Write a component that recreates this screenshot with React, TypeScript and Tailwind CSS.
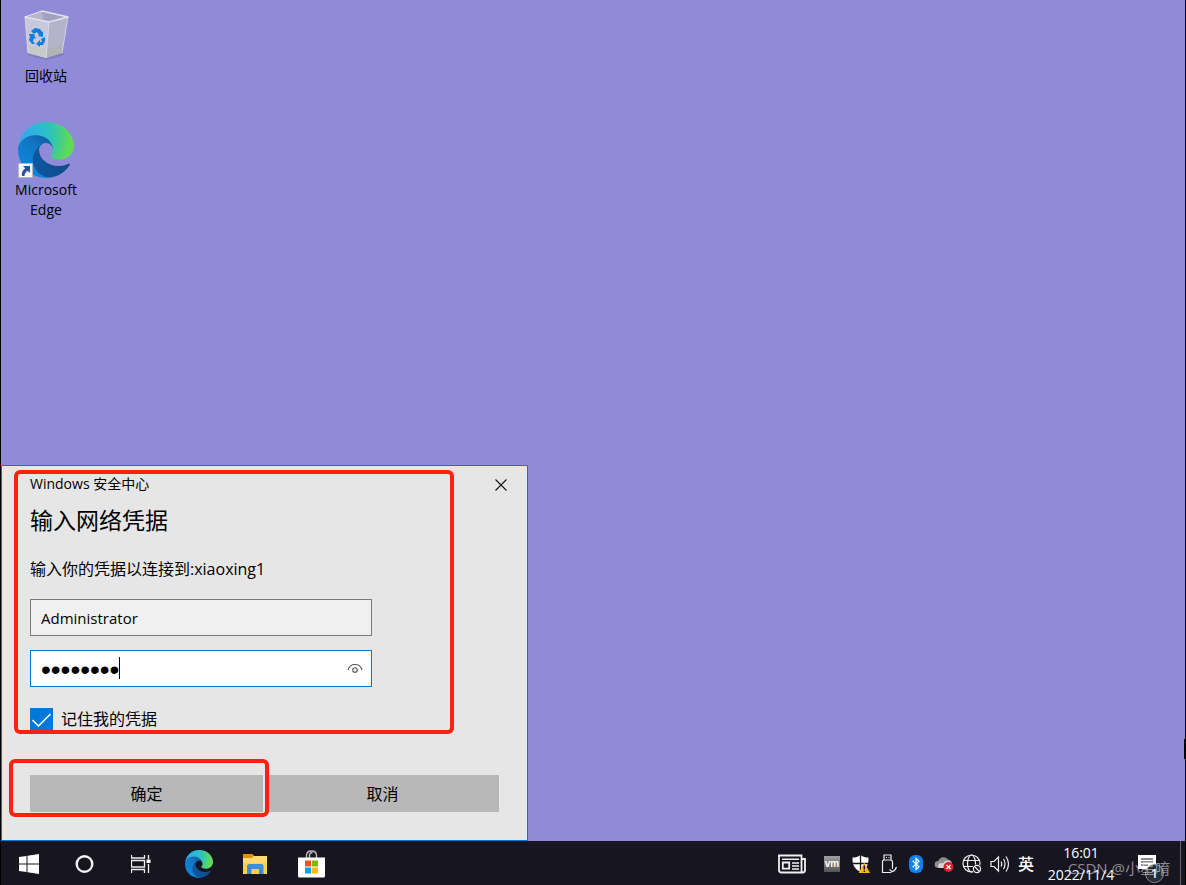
import React, { FC, ReactNode } from 'react'

const EdgeLogo: FC<{ size: string, id: string }> = ({ size, id }) => (
    <svg className={size} viewBox="0 0 256 256" aria-hidden="true">
        <defs>
            <linearGradient id={`${id}-dark`} x1="60" y1="180" x2="240" y2="180" gradientUnits="userSpaceOnUse">
                <stop offset="0" stopColor="#0c59a4" />
                <stop offset="1" stopColor="#114a8b" />
            </linearGradient>
            <linearGradient id={`${id}-blue`} x1="150" y1="95" x2="45" y2="225" gradientUnits="userSpaceOnUse">
                <stop offset="0" stopColor="#115fa8" />
                <stop offset=".35" stopColor="#1277c4" />
                <stop offset="1" stopColor="#0a86dc" />
            </linearGradient>
            <radialGradient id={`${id}-green`} cx="26" cy="70" r="230" gradientUnits="userSpaceOnUse">
                <stop offset="0" stopColor="#35a8e8" />
                <stop offset=".3" stopColor="#2bb7da" />
                <stop offset=".6" stopColor="#2fc4b4" />
                <stop offset=".95" stopColor="#5fdc55" />
            </radialGradient>
        </defs>
        <g transform="translate(-4.63 -4.92)">
            <path fill={`url(#${id}-dark)`} d="M235.68 195.46a93.73 93.73 0 0 1-10.54 4.71 101.87 101.87 0 0 1-35.9 6.46c-47.32 0-88.54-32.55-88.54-74.32A31.48 31.48 0 0 1 117.13 105c-42.8 1.8-53.8 46.4-53.8 72.53 0 73.88 68.09 81.37 82.76 81.37 7.91 0 19.84-2.3 27-4.56l1.31-.44a128.34 128.34 0 0 0 66.6-52.8 4 4 0 0 0-5.32-5.64z" />
            <path fill={`url(#${id}-blue)`} d="M110.34 246.34A79.2 79.2 0 0 1 87.6 225a80.72 80.72 0 0 1 29.53-120c3.12-1.47 8.45-4.13 15.54-4a32.35 32.35 0 0 1 25.69 13 31.88 31.88 0 0 1 6.36 18.66c0-.21 24.46-79.6-80-79.6-43.9 0-80 41.66-80 78.21a130.15 130.15 0 0 0 12.11 56 128 128 0 0 0 156.38 67.11 75.55 75.55 0 0 1-62.78-8z" />
            <path fill={`url(#${id}-green)`} d="M156.94 153.78c-.81 1.05-3.3 2.5-3.3 5.66 0 2.61 1.7 5.12 4.72 7.23 14.38 10 41.49 8.68 41.56 8.68a59.56 59.56 0 0 0 30.27-8.35 61.38 61.38 0 0 0 30.43-52.88c.26-22.41-8-37.31-11.34-43.91C228.09 28.76 182.35 4.92 132.61 4.92a128 128 0 0 0-128 126.2c.48-36.54 36.8-66.05 80-66.05 3.5 0 23.46.34 42 10.07 16.34 8.58 24.9 18.94 30.85 29.21 6.18 10.67 7.28 24.15 7.28 29.52s-2.74 13.33-7.8 19.91z" />
        </g>
    </svg>
)

const RecycleBin: FC = () => (
    <svg className="h-14 w-14" viewBox="0 0 56 56" aria-hidden="true">
        <path d="M9 47l19 5 18-5-1-2-17 4-18-3z" fill="#716da3" opacity=".5" />
        <path d="M7 9L31 14 28 50 10 45z" fill="#c9c7da" />
        <path d="M31 14L50 9 44 45 28 50z" fill="#b5b3c9" />
        <path d="M9 38l20 3-1 9L10 45z" fill="#c6cbc9" />
        <path d="M29 41l16-4-1 8-16 5z" fill="#b0b4b4" />
        <path d="M7 9L24 3l26 6-19 5z" fill="#a3a0c0" />
        <path d="M24 3l1 9-15-3z" fill="#b7b5cb" />
        <path d="M7 9L24 3l26 6-19 5z" fill="none" stroke="#e4e4ee" strokeWidth="1.3" strokeLinejoin="round" />
        <path d="M31 14l-3 36" stroke="#dcdbe8" strokeWidth="1" />
        <path d="M7 9l3 36M50 9l-6 36" fill="none" stroke="#dddce8" strokeWidth=".8" />
        <g fill="#0c80dc">
            <path d="M13 23l4-3 5 1 2 3 1-1 0 6-5-1 1-1-2-3-3 2z" />
            <path d="M11 26l5 0 2 5-2-1-1 3 2 3-3 0-3-4 1-3z" />
            <path d="M27 29l-4 2 1 3-2 0 0-2-4 4 4 3 0-2 3 0 2-4z" />
        </g>
    </svg>
)

const DesktopIcon: FC<{ label: string, children: ReactNode }> = ({ label, children }) => (
    <button type="button" className="flex w-[90px] flex-col items-center gap-0.5 text-center text-sm leading-5 text-black">
        <span className="relative">{children}</span>
        <span className="px-2">{label}</span>
    </button>
)

const CredentialDialog: FC = () => {
    return (
        <section role="dialog" aria-labelledby="dialog-title" className="relative w-[527px] max-w-full border border-[#0078d7] bg-[#e6e6e6] px-7 pt-2 pb-7 text-black">
            <div className="flex items-center justify-between">
                <p className="text-sm leading-5">Windows 安全中心</p>
                <button type="button" aria-label="关闭" className="-mr-3 flex h-5 w-5 items-center justify-center pt-px">
                    <svg className="h-3 w-3" viewBox="0 0 12 12" stroke="#111" strokeWidth="1.1">
                        <path d="M.5.5l11 11M11.500.5l-11 11" />
                    </svg>
                </button>
            </div>
            <h1 id="dialog-title" className="mt-3 text-[23px] leading-7">输入网络凭据</h1>
            <p className="mt-[23px] text-base leading-6">输入你的凭据以连接到:xiaoxing1</p>
            <input type="text" aria-label="用户名" defaultValue="Administrator" className="mt-[18px] block h-[37px] w-[342px] border border-[#7a7a7a] bg-[#f0f0f0] px-2.5 text-[15px] outline-none" />
            <div className="relative mt-3.5 flex h-[37px] w-[342px] items-center border border-[#0078d7] bg-white pr-2 pl-2.5">
                <input type="password" aria-label="密码" defaultValue="xiaoxing" className="h-[35px] min-w-0 flex-1 pt-0.5 font-['Liberation_Sans',sans-serif] text-[28px] outline-none" />
                <span className="absolute top-1.5 left-[88px] h-[22px] w-px bg-black"></span>
                <button type="button" aria-label="显示密码" className="flex h-5 w-4 items-center justify-center">
                    <svg className="h-3 w-4" viewBox="0 0 16 12" fill="none" stroke="#555" strokeWidth="1.1">
                        <path d="M1 7C2 3.500 4.500 1.500 8 1.500S14 3.500 15 7" />
                        <circle cx="8" cy="7" r="2.300" />
                    </svg>
                </button>
            </div>
            <label className="mt-[21px] flex items-center gap-2 text-base leading-[23px]">
                <span className="relative h-[23px] w-[23px]">
                    <input type="checkbox" defaultChecked className="block h-[23px] w-[23px] appearance-none bg-[#0078d7]" />
                    <svg className="pointer-events-none absolute inset-0 h-[23px] w-[23px]" viewBox="0 0 23 23" fill="none" stroke="#fff" strokeWidth="1.500">
                        <path d="M2.500 12l6 6L20.500 6" />
                    </svg>
                </span>
                记住我的凭据
            </label>
            <div className="mt-11 flex gap-[3px] text-base">
                <button type="button" className="h-[37px] flex-1 bg-[#b8b8b8]">确定</button>
                <button type="button" className="h-[37px] flex-1 bg-[#b8b8b8]">取消</button>
            </div>
            {/* highlight frames */}
            <div className="pointer-events-none absolute top-1 left-3 h-[264px] w-[440px] rounded-md border-4 border-[#ff2010]"></div>
            <div className="pointer-events-none absolute bottom-[23px] left-[7px] h-[58px] w-[260px] rounded-md border-4 border-[#ff2010]"></div>
        </section>
    )
}

const TaskButton: FC<{ label: string, children: ReactNode }> = ({ label, children }) => (
    <button type="button" aria-label={label} className="flex h-11 w-14 items-center justify-center pt-0.5">{children}</button>
)

const TrayButton: FC<{ label: string, children: ReactNode }> = ({ label, children }) => (
    <button type="button" aria-label={label} className="flex h-11 w-7 items-center justify-center pt-0.5">{children}</button>
)

const Taskbar: FC = () => {
    return (
        <footer className="relative flex h-11 shrink-0 justify-between bg-[#171520] text-white">
            <nav className="flex">
                <TaskButton label="开始">
                    <svg className="h-5 w-5" viewBox="0 0 20 20" fill="#fff">
                        <path d="M0 3l7.500-1v7.500H0zM8.500 1.800L20 0v9.500H8.500zM0 10.500h7.500V18L0 17zM8.500 10.500H20V20L8.500 18.200z" />
                    </svg>
                </TaskButton>
                <TaskButton label="Cortana">
                    <svg className="h-5 w-5" viewBox="0 0 20 20" fill="none" stroke="#f4f4f4" strokeWidth="2.400">
                        <circle cx="9.500" cy="10" r="7.800" />
                    </svg>
                </TaskButton>
                <TaskButton label="任务视图">
                    <svg className="h-5 w-5" viewBox="0 0 20 20" fill="none" stroke="#f0f0f0" strokeWidth="1.300">
                        <path d="M.5 1v3h13V1M.5 19v-3.500h13V19M.5 6.500h13v6.500H.5zM17.500 1v4M17.500 10v9" />
                        <path d="M15.500 5.500h4v3.500h-4z" fill="#fff" stroke="none" />
                    </svg>
                </TaskButton>
                <div className="flex pl-0.5">
                    <TaskButton label="Microsoft Edge"><EdgeLogo size="h-7 w-7" id="edge-task" /></TaskButton>
                    <TaskButton label="文件资源管理器">
                        <svg className="h-6 w-[26px]" viewBox="0 0 26 24">
                            <path d="M1 2h9l2 2h13v18H1z" fill="#ffcf50" />
                            <path d="M1 2h9l2 2-2 2H1z" fill="#dc9206" />
                            <path d="M1 6h9l2-2h13v7H1z" fill="#ffda70" />
                            <path d="M5 13.500L7 12h13l1.500 1.500V22H17v-5H9.500v5H5z" fill="#3c8fd4" />
                        </svg>
                    </TaskButton>
                    <TaskButton label="Microsoft Store">
                        <svg className="h-7 w-7" viewBox="0 0 28 28">
                            <path d="M9.500 8V5.500C9.500 2.500 11 1 14.500 1s5 1.500 5 4.500V8M12.500 8V5.500c0-2 1-3 3-3" fill="none" stroke="#b9b9bd" strokeWidth="1.400" />
                            <path d="M1 7.500h27V26q0 1.500-1.500 1.500h-24Q1 27.500 1 26z" fill="#fff" />
                            <path d="M8 10.500h6v6H8z" fill="#f25022" />
                            <path d="M15 10.500h6v6h-6z" fill="#7fba00" />
                            <path d="M8 17.500h6v6H8z" fill="#00a4ef" />
                            <path d="M15 17.500h6v6h-6z" fill="#ffb900" />
                        </svg>
                    </TaskButton>
                </div>
            </nav>

            <div className="flex">
                <button type="button" aria-label="资讯和兴趣" className="flex h-11 w-[52px] items-center justify-center pt-0.5">
                    <svg className="h-5 w-7" viewBox="0 0 28 20" fill="none" stroke="#f0f0f0" strokeWidth="1.800">
                        <path d="M23.500 15V1.500H1V16q0 2.500 2.500 2.500H25q2-.2 2-2.500V5h-3.500v11q0 2.500 1.500 2.500" />
                        <path d="M4.800 8.500h6.400v6.200H4.800z" />
                        <path d="M4 5.300h17M14 9h7M14 12h7M14 15h7" strokeWidth="1.500" />
                    </svg>
                </button>
                <TrayButton label="VMware Tools">
                    <span className="flex h-4 w-4 items-center justify-center bg-linear-to-b from-[#a0a0a0] to-[#555] font-['Liberation_Sans',sans-serif] text-[10px] leading-3 font-bold text-white">vm</span>
                </TrayButton>
                <TrayButton label="Windows 安全中心">
                    <svg className="h-5 w-5" viewBox="0 0 20 20">
                        <path d="M10.500 1C8 3 5.500 3.500 2.500 3.500 2.300 11 4.500 15 10.500 18c6-3 8.200-7 8-14.500C15.500 3.500 13 3 10.500 1z" fill="#fff" />
                        <path d="M10.500 1v17M2 9.500h17" stroke="#171520" strokeWidth="1.300" />
                        <path d="M14.300 8.500l5.700 10.500H8.600z" fill="#fbb81b" />
                        <path d="M14.300 11.500v4M14.300 16.500v1.500" stroke="#171520" strokeWidth="1.400" />
                    </svg>
                </TrayButton>
                <TrayButton label="安全删除硬件">
                    <svg className="h-5 w-5" viewBox="0 0 20 20" fill="none" stroke="#eee" strokeWidth="1.200">
                        <path d="M6 6V1h7v5M4.500 18.500V8q0-2 2-2h6q2 0 2 2v10.500z" />
                        <path d="M8 3.500h1M10.500 3.500h1" />
                        <path d="M12 15.500l2.500 2 4-5" stroke="#171520" strokeWidth="3" />
                        <path d="M11.500 15.500l2.500 2.200q3-.7 4.500-4.700" />
                    </svg>
                </TrayButton>
                <TrayButton label="蓝牙">
                    <svg className="h-[18px] w-3.5" viewBox="0 0 14 18">
                        <rect width="14" height="18" rx="6" fill="#0a84f5" />
                        <path d="M3.700 5.700l6.300 6L7 14.500v-11L10 6.300l-6.300 6" fill="none" stroke="#fff" strokeWidth="1.200" />
                    </svg>
                </TrayButton>
                <TrayButton label="OneDrive">
                    <svg className="h-4 w-5" viewBox="0 0 20 16">
                        <path d="M4 12a3.500 3.500 0 0 1 .3-7A5.500 5.500 0 0 1 14 3.500 4.500 4.500 0 0 1 17 11H6z" fill="#8d8d8d" />
                        <path d="M4.500 12C3 8 7 6 9 7.500 10 5 14 3.500 16 5.500 19 7.500 18.500 12 15 12z" fill="#d6d6d6" />
                        <circle cx="14.500" cy="11" r="5" fill="#d9202c" />
                        <path d="M12.500 9l4 4M16.500 9l-4 4" stroke="#fff" strokeWidth="1.300" />
                    </svg>
                </TrayButton>
                <TrayButton label="网络">
                    <svg className="h-5 w-5" viewBox="0 0 20 20" fill="none" stroke="#f0f0f0" strokeWidth="1.200">
                        <circle cx="9.500" cy="9.500" r="8.500" />
                        <ellipse cx="9.500" cy="9.500" rx="4" ry="8.500" />
                        <path d="M1.500 6.500h16M1.500 12.500h16" />
                        <circle cx="15" cy="15" r="4.800" fill="#171520" stroke="none" />
                        <circle cx="15" cy="15" r="3.600" />
                        <path d="M12.500 12.500l5 5" />
                    </svg>
                </TrayButton>
                <TrayButton label="音量">
                    <svg className="h-5 w-5" viewBox="0 0 20 20" fill="none" stroke="#f0f0f0" strokeWidth="1.200">
                        <path d="M1 7.500h3l4.500-4.500v14L4 12.500H1z" />
                        <path d="M11 7.500q1.500 2.500 0 5M13.500 5q3 5 0 10M16 2.500q5 7.500 0 15" />
                    </svg>
                </TrayButton>
                <button type="button" className="h-11 w-6 pt-0.5 text-base font-medium">英</button>
                <button type="button" className="ml-1 flex w-[78px] flex-col items-center pt-px text-sm leading-[22px]">
                    <span>16:01</span>
                    <span>2022/11/4</span>
                </button>
                <button type="button" aria-label="通知" className="relative mr-1.5 flex h-11 w-[54px] items-center justify-center pt-0.5">
                    <svg className="h-5 w-5" viewBox="0 0 20 20">
                        <path d="M1 1h18v14h-3v4l-4-4H1z" fill="#fff" />
                        <path d="M4 5h12M4 8h12M4 11h7" stroke="#171520" strokeWidth="1.200" />
                    </svg>
                    <span className="absolute right-2.5 bottom-0.5 h-[19px] w-[19px] rounded-full border border-[#85858a] bg-[#2c2b31] text-center text-xs leading-[17px] font-semibold">1</span>
                </button>
                <button type="button" aria-label="显示桌面" className="h-11 w-[5px] border-l border-[#66646c]"></button>
            </div>
            <span className="pointer-events-none absolute right-[15px] bottom-[7px] text-[15px] leading-5 text-white/50">CSDN @小星唷</span>
        </footer>
    )
}

const App: FC = () => {
    return (
        <div className="flex min-h-screen flex-col border-x border-black bg-[#8f8bd8] font-['Open_Sans','Noto_Sans_CJK_SC',sans-serif]">
            <main className="relative flex flex-1 flex-col items-start justify-between">
                <div className="flex flex-col gap-9 pt-2">
                    <DesktopIcon label="回收站"><RecycleBin /></DesktopIcon>
                    <DesktopIcon label="Microsoft Edge">
                        <EdgeLogo size="h-14 w-14" id="edge-desk" />
                        <svg className="absolute bottom-0 left-0 h-[15px] w-[15px]" viewBox="0 0 15 15" aria-hidden="true">
                            <path d="M.5.5h14v14H.5z" fill="#f8f8f8" stroke="#b8b8b8" />
                            <path d="M5 3h7v7L9.800 7.800Q6.500 9.500 6.500 13H4Q3 8.500 7.200 5.200z" fill="#285493" />
                        </svg>
                    </DesktopIcon>
                </div>
                <CredentialDialog />
                <span className="absolute right-0 bottom-[82px] h-5 w-px bg-black"></span>
            </main>
            <Taskbar />
        </div>
    )
}

export default App
